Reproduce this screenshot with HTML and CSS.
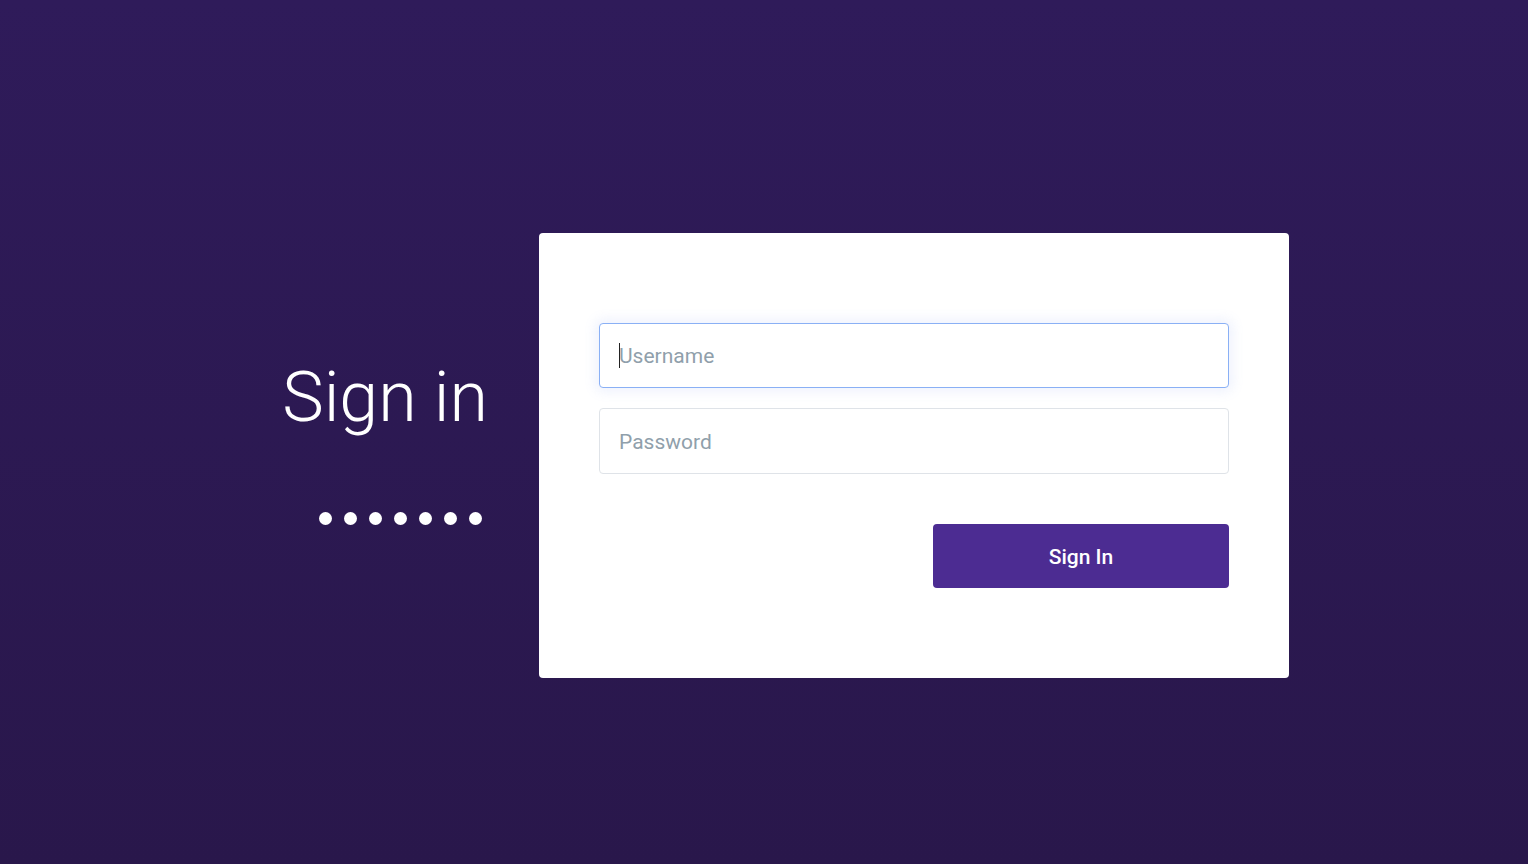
FILE: index.html
```html
<!DOCTYPE html>
<html lang="en">
<head>
<meta charset="utf-8">
<title>Sign in</title>
<link rel="stylesheet" href="styles.css">
</head>
<body>
<main class="page">
  <section class="intro">
    <h1 class="title">Sign in</h1>
    <div class="dots"><span></span><span></span><span></span><span></span><span></span><span></span><span></span></div>
  </section>
  <form class="card">
    <div class="field field-focus">
      <input class="input input-focus" type="text" placeholder="Username">
      <span class="caret"></span>
    </div>
    <div class="field">
      <input class="input input-tall" type="password" placeholder="Password">
    </div>
    <div class="actions">
      <button class="btn" type="button">Sign In</button>
    </div>
  </form>
</main>
</body>
</html>
```
FILE: styles.css
```css
* { box-sizing: border-box; }
html, body { margin: 0; height: 100%; }
body {
  background: linear-gradient(180deg, #2f1b5a 0%, #29174b 100%);
  font-family: Roboto, "Liberation Sans", sans-serif;
}
.page {
  display: flex;
  justify-content: center;
  gap: 52px;
  padding-top: 233px;
  padding-right: 2px;
}
.intro {
  width: 250px;
  display: flex;
  flex-direction: column;
  align-items: flex-end;
  padding-top: 123px;
}
.title {
  margin: 0;
  color: #fff;
  font-weight: 300;
  font-size: 70px;
  line-height: 82px;
  margin-right: -1px;
}
.dots {
  display: flex;
  gap: 12px;
  margin-top: 74px;
  margin-right: 5px;
}
.dots span {
  width: 13px;
  height: 13px;
  border-radius: 50%;
  background: #fff;
}
.card {
  width: 750px;
  height: 445px;
  background: #fff;
  border-radius: 4px;
  padding: 90px 60px;
  display: flex;
  flex-direction: column;
  gap: 20px;
}
.field { position: relative; }
.input {
  display: block;
  width: 100%;
  height: 65px;
  border: 1px solid #dfe3e8;
  border-radius: 4px;
  padding: 0 19px;
  font-family: Roboto, "Liberation Sans", sans-serif;
  font-size: 21px;
  color: #333;
  outline: none;
}
.input-tall { height: 66px; padding-top: 2px; }
.input::placeholder { color: #909fab; }
.input-focus {
  border-color: #8ab0f5;
  box-shadow: 0 0 12px 4px rgba(120, 150, 240, 0.12);
}
.caret {
  position: absolute;
  left: 20px;
  top: 20px;
  width: 1px;
  height: 25px;
  background: #222;
}
.actions {
  display: flex;
  justify-content: flex-end;
  margin-top: 30px;
}
.btn {
  width: 296px;
  height: 64px;
  border: none;
  border-radius: 4px;
  background: #4c2c92;
  color: #fff;
  font-family: Roboto, "Liberation Sans", sans-serif;
  font-size: 21px;
  font-weight: 500;
  padding-top: 2px;
}
```
